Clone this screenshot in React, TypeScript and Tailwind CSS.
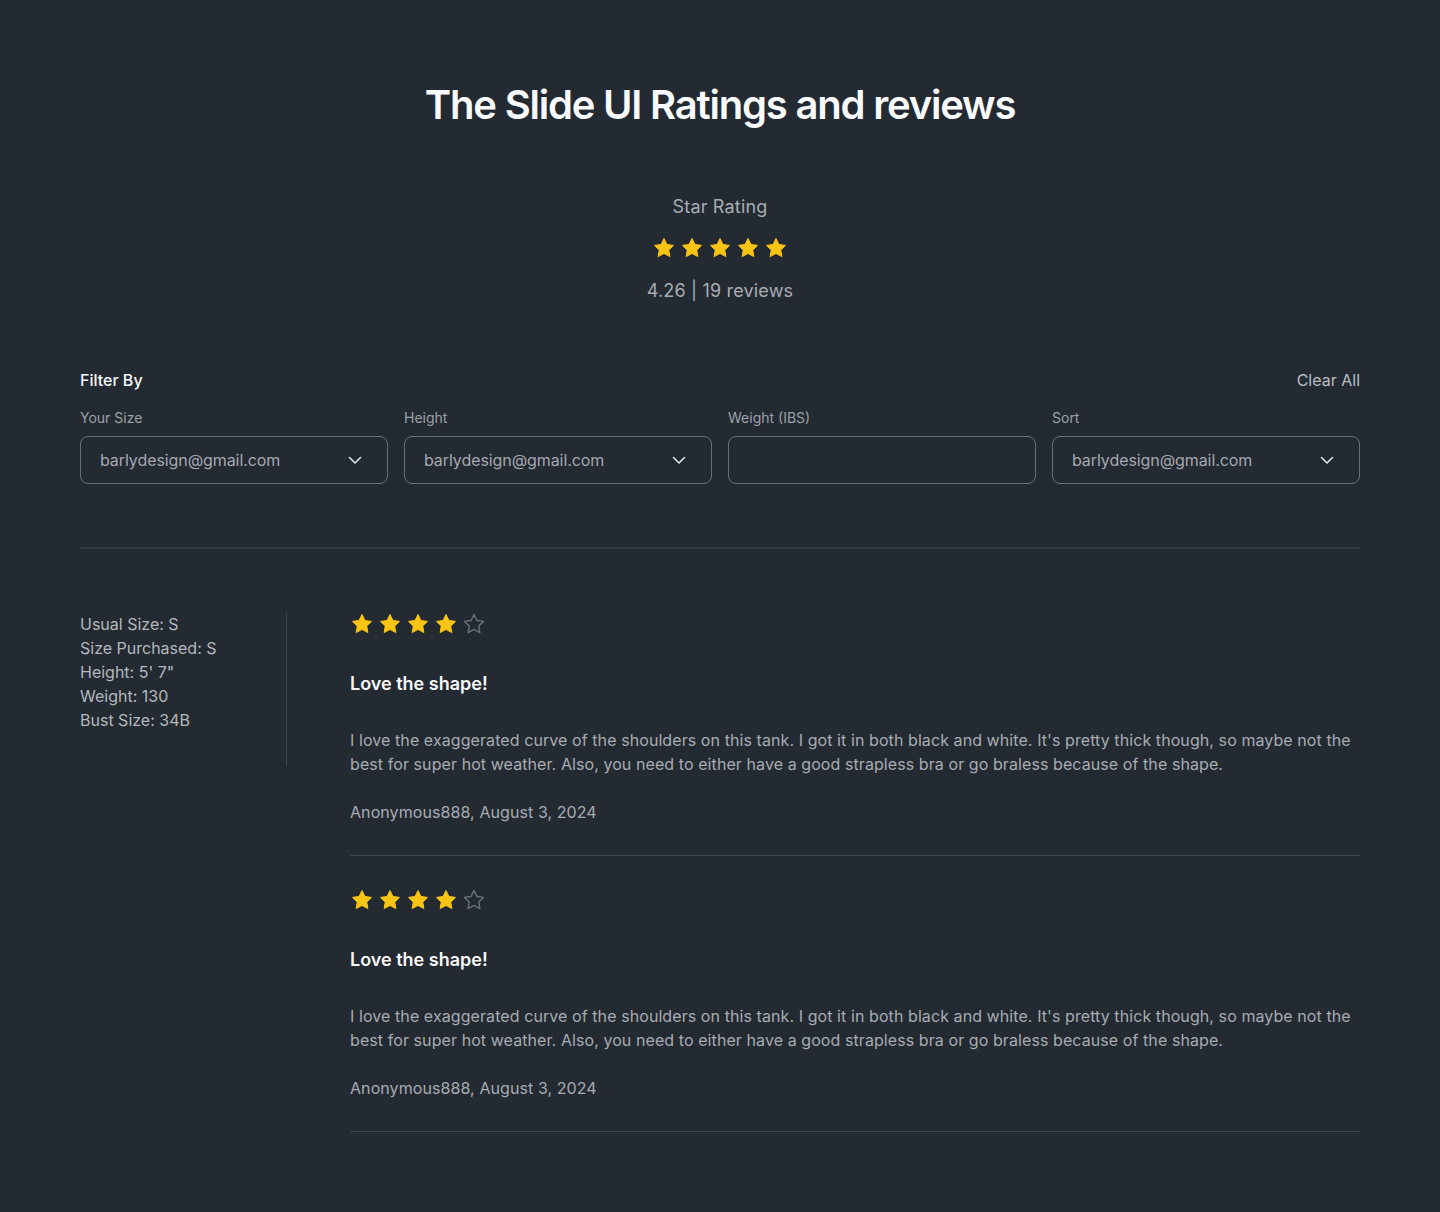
import React from 'react';

const STAR_PATH =
  'M12 2.5l2.94 5.96 6.56.95-4.75 4.63 1.12 6.54L12 17.49l-5.87 3.09 1.12-6.54L2.5 9.41l6.56-.95L12 2.5z';

const Star = ({ filled }: { filled: boolean }) => (
  <svg width="24" height="24" viewBox="0 0 24 24" className="shrink-0">
    {filled ? (
      <path d={STAR_PATH} fill="#f9c514" stroke="#f9c514" strokeWidth="1" strokeLinejoin="round" />
    ) : (
      <path d={STAR_PATH} fill="none" stroke="#6b717b" strokeWidth="1.4" strokeLinejoin="round" />
    )}
  </svg>
);

const Stars = ({ count, total = 5 }: { count: number; total?: number }) => (
  <div className="flex items-center gap-1">
    {Array.from({ length: total }).map((_, i) => (
      <Star key={i} filled={i < count} />
    ))}
  </div>
);

const Chevron = () => (
  <svg width="16" height="16" viewBox="0 0 16 16" fill="none" className="shrink-0">
    <path d="M2.5 5.5L8 11l5.5-5.5" stroke="#e1e4e8" strokeWidth="1.6" strokeLinecap="round" strokeLinejoin="round" />
  </svg>
);

// Filter field: select-ish box or empty input
const FilterField = ({ label, value }: { label: string; value?: string }) => (
  <div className="flex flex-col">
    <span className="text-sm leading-5 text-[#9ba1a9]">{label}</span>
    <div className="mt-2 flex h-12 items-center justify-between rounded-lg border border-[#6a7079] pl-[19px] pr-6">
      {value && (
        <>
          <span className="text-base tracking-[-0.005em] text-[#a3a8b0]">{value}</span>
          <Chevron />
        </>
      )}
    </div>
  </div>
);

const reviewText =
  "I love the exaggerated curve of the shoulders on this tank. I got it in both black and white. It's pretty thick though, so maybe not the best for super hot weather. Also, you need to either have a good strapless bra or go braless because of the shape.";

const Review = ({ first }: { first?: boolean }) => (
  <div className={`flex flex-col border-b border-[#40464f] pb-[31px] ${first ? '' : 'pt-8'}`}>
    <Stars count={4} />
    <h3 className="mt-[34px] text-lg font-semibold leading-7 text-[#f6f7f8]">Love the shape!</h3>
    <p className="mt-[30px] text-base leading-6 tracking-[0.005em] text-[#a7acb3]">{reviewText}</p>
    <p className="mt-6 text-base leading-6 tracking-[0.005em] text-[#a7acb3]">Anonymous888, August 3, 2024</p>
  </div>
);

export default function App() {
  return (
    <div
      className="min-h-[1212px] w-full bg-[#242a32] pb-20 pt-[81px]"
      style={{ fontFamily: 'Inter, "Noto Sans", sans-serif' }}
    >
      <div className="mx-auto w-[1280px]">
        {/* Header */}
        <h1 className="text-center text-[40px] font-semibold leading-[48px] tracking-[-0.03em] text-[#f8f9fa]">
          The Slide UI Ratings and reviews
        </h1>

        <div className="mt-16 flex flex-col items-center">
          <span className="text-lg leading-7 tracking-[0.01em] text-[#a8adb4]">Star Rating</span>
          <div className="mt-[15px]">
            <Stars count={5} />
          </div>
          <span className="mt-[17px] text-lg leading-7 tracking-[0.01em] text-[#a8adb4]">4.26 | 19 reviews</span>
        </div>

        {/* Filters */}
        <div className="mt-[63px] flex items-center justify-between">
          <span className="text-base font-medium leading-6 text-[#f4f5f6]">Filter By</span>
          <span className="text-base leading-6 text-[#b9bdc3]">Clear All</span>
        </div>
        <div className="mt-4 grid grid-cols-4 gap-4">
          <FilterField label="Your Size" value="barlydesign@gmail.com" />
          <FilterField label="Height" value="barlydesign@gmail.com" />
          <FilterField label="Weight (IBS)" />
          <FilterField label="Sort" value="barlydesign@gmail.com" />
        </div>

        <div className="mt-[63px] h-[2px] bg-[#353b44]" />

        {/* Reviews */}
        <div className="mt-[63px] flex">
          <div className="h-[154px] w-[207px] shrink-0 border-r border-[#3d434c] text-base leading-6 text-[#b3b8be]">
            <p>Usual Size: S</p>
            <p>Size Purchased: S</p>
            <p>Height: 5' 7"</p>
            <p>Weight: 130</p>
            <p>Bust Size: 34B</p>
          </div>
          <div className="ml-[63px] flex flex-1 flex-col">
            <Review first />
            <Review />
          </div>
        </div>
      </div>
    </div>
  );
}
